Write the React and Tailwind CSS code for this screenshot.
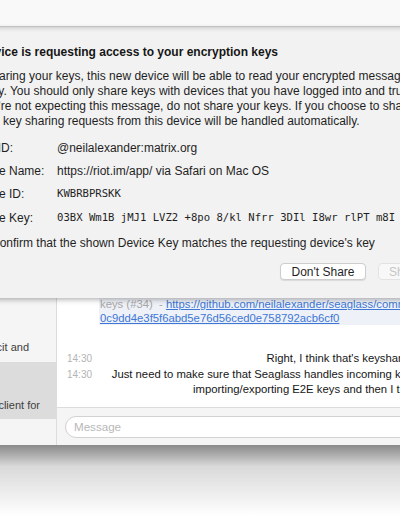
import React from "react";

const sans = { fontFamily: "'Liberation Sans', Arial, sans-serif" };
const mono = { fontFamily: "'DejaVu Sans Mono', 'Liberation Mono', monospace" };

function Dialog() {
  const rows = [
    ["User ID:", "@neilalexander:matrix.org", false],
    ["Device Name:", "https://riot.im/app/ via Safari on Mac OS", false],
    ["Device ID:", "KWBRBPRSKK", true],
    ["Device Key:", "03BX Wm1B jMJ1 LVZ2 +8po 8/kl Nfrr 3DIl I8wr rlPT m8I", true],
  ];
  return (
    <div className="absolute left-[109px] top-[27px] w-[503px] h-[271px] bg-[#f2f2f2] shadow-[0_2px_5px_rgba(0,0,0,0.28),inset_0_6px_5px_-5px_rgba(0,0,0,0.18)] pl-[20px] pr-[20px] pt-[18px] text-[#1f1f1f]">
      <div className="text-[12px] leading-[15px] font-bold whitespace-nowrap text-[#161616]">
        A device is requesting access to your encryption keys
      </div>
      <div className="mt-[9px] text-[12px] leading-[15px] whitespace-nowrap">
        <div>By sharing your keys, this new device will be able to read your encrypted message</div>
        <div>history. You should only share keys with devices that you have logged into and trust.</div>
        <div>If you're not expecting this message, do not share your keys. If you choose to share,</div>
        <div>future key sharing requests from this device will be handled automatically.</div>
      </div>
      <div className="mt-[7px] text-[12px]">
        {rows.map(([k, v, isMono]) => (
          <div key={k} className="flex h-[23.3px] items-center whitespace-nowrap">
            <div className="w-[88px] shrink-0">{k}</div>
            <div className={isMono ? "text-[10.6px]" : ""} style={isMono ? mono : undefined}>
              {v}
            </div>
          </div>
        ))}
      </div>
      <label className="mt-[7px] flex items-center gap-[8px] text-[12px] leading-[15px] whitespace-nowrap">
        <span className="w-[14px] h-[14px] shrink-0 rounded-[3px] bg-white border border-[#bdbdbd]" />
        <span>Confirm that the shown Device Key matches the requesting device's key</span>
      </label>
      <div className="mt-[12px] flex justify-end gap-[12px]">
        <button className="h-[17px] w-[86px] rounded-[4px] bg-white border border-[#cdcdcd] shadow-[0_1px_1px_rgba(0,0,0,0.1)] text-[12px] leading-none text-[#1f1f1f]">
          Don't Share
        </button>
        <button className="h-[17px] w-[54px] rounded-[4px] bg-[#f8f8f8] border border-[#e3e3e3] text-[12px] leading-none text-[#c6c6c6]">
          Share
        </button>
      </div>
    </div>
  );
}

export default function App() {
  return (
    <div className="w-[400px] h-[516px] overflow-hidden bg-white relative" style={sans}>
      <div className="-ml-[160px] w-[640px] relative">
        <div className="h-[27px] bg-[#f9f9f9] border-b border-[#cbcbcb]" />
        <div className="flex h-[418px]">
          <div className="w-[217px] shrink-0 bg-[#f5f5f5] border-r border-[#dcdcdc] flex flex-col text-[11px] leading-[14px] text-[#404040]">
            <div className="h-[313px]" />
            <div className="text-right pr-[27px] whitespace-nowrap">Discuss explicit and</div>
            <div className="mt-[8px] h-[57px] bg-[#dcdcdc] pt-[36px] text-right pr-[16px] whitespace-nowrap">
              Seaglass, a Matrix client for
            </div>
          </div>
          <div className="flex-1 flex flex-col bg-white min-w-0">
            <div className="flex-1 overflow-hidden">
              <div className="mt-[268px] ml-[42px] bg-[#eef1f7] pt-[2px] pl-[1px] text-[11.3px] leading-[14px] whitespace-nowrap">
                <div className="text-[#a8a8a8]">
                  keys (#34)&nbsp;&nbsp;-&nbsp;
                  <span className="text-[#3d77d6] underline">https://github.com/neilalexander/seaglass/commit/</span>
                </div>
                <div className="text-[#3d77d6] underline">0c9dd4e3f5f6abd5e76d56ced0e758792acb6cf0</div>
              </div>
              <div className="mt-[26px] flex text-[11.3px] leading-[15px] text-[#161616] pr-[21px]">
                <div className="w-[42px] shrink-0 pl-[10px] text-[10px] text-[#b3b3b3]">14:30</div>
                <div className="flex-1 text-right whitespace-nowrap">Right, I think that's keysharing working</div>
              </div>
              <div className="mt-[1px] flex text-[11.3px] leading-[15px] text-[#161616] pr-[21px]">
                <div className="w-[42px] shrink-0 pl-[10px] text-[10px] text-[#b3b3b3]">14:30</div>
                <div className="flex-1 text-right whitespace-nowrap">
                  <div>Just need to make sure that Seaglass handles incoming key requests</div>
                  <div>importing/exporting E2E keys and then I think that's it</div>
                </div>
              </div>
            </div>
            <div className="h-[38px] bg-[#f5f5f5] border-t border-[#dcdcdc] px-[8px] pt-[8px]">
              <div className="h-[22px] rounded-full bg-white border border-[#d2d2d2] pl-[8px] flex items-center text-[11.6px] text-[#b8b8b8]">
                Message
              </div>
            </div>
          </div>
        </div>
        <Dialog />
      </div>
      <div className="h-[71px] bg-linear-to-b from-[#8a8a8a] via-[#d9d9d9] via-30% to-white" />
    </div>
  );
}
